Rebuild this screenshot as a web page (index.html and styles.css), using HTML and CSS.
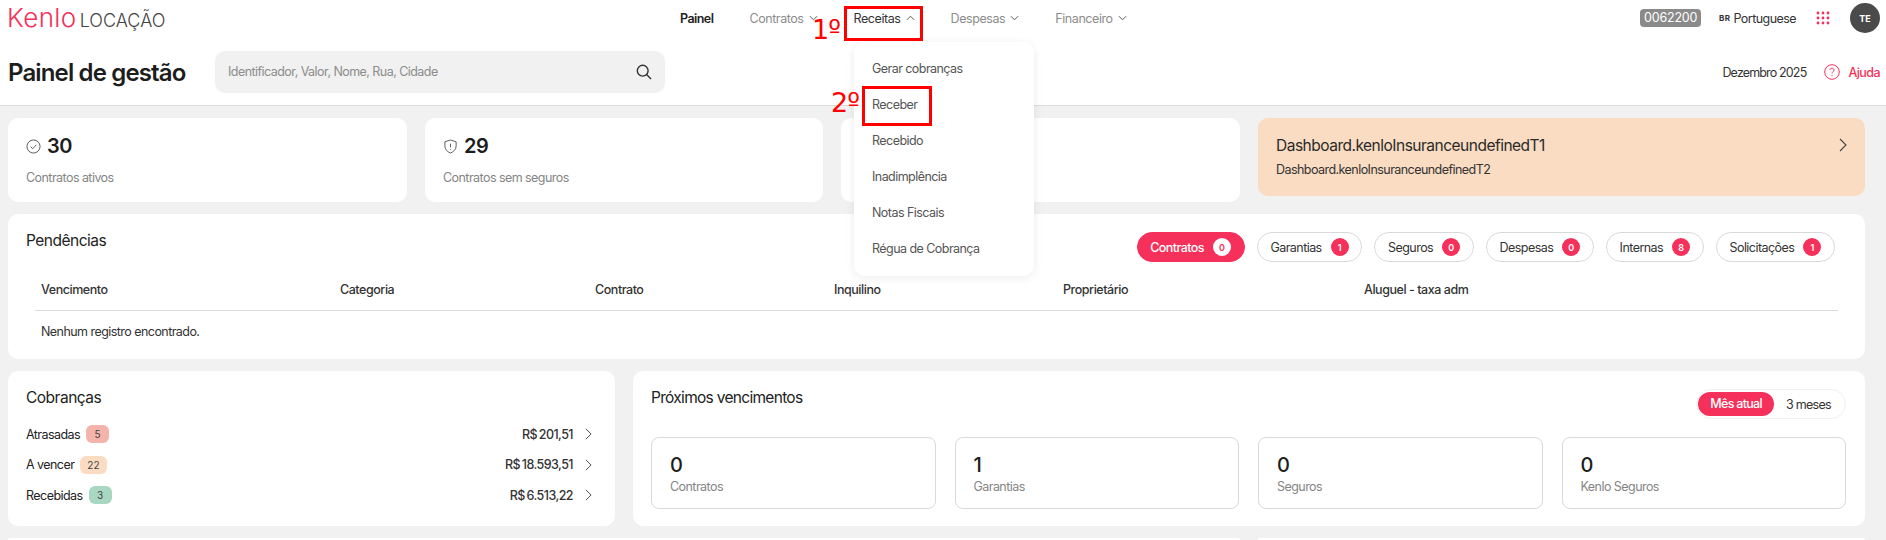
FILE: index.html
```html
<!DOCTYPE html>
<html lang="pt-BR">
<head>
<meta charset="utf-8">
<title>Kenlo Locação</title>
<link rel="stylesheet" href="styles.css">
</head>
<body>
<header class="header">
  <div class="topbar">
    <div class="logo"><span class="logo-mark">Kenlo</span><span class="logo-sub">LOCAÇÃO</span></div>
    <nav class="nav">
      <span class="nav-item nav-current">Painel</span>
      <span class="nav-item">Contratos <svg class="chev" viewBox="0 0 10 6"><path d="M1 1l4 4 4-4"/></svg></span>
      <span class="nav-item nav-open">Receitas <svg class="chev" viewBox="0 0 10 6"><path d="M1 5l4-4 4 4"/></svg></span>
      <span class="nav-item">Despesas <svg class="chev" viewBox="0 0 10 6"><path d="M1 1l4 4 4-4"/></svg></span>
      <span class="nav-item">Financeiro <svg class="chev" viewBox="0 0 10 6"><path d="M1 1l4 4 4-4"/></svg></span>
    </nav>
    <div class="top-right">
      <span class="code">0062200</span>
      <span class="lang"><b>BR</b>Portuguese</span>
      <svg class="apps" viewBox="0 0 14 14"><g><circle cx="2" cy="2" r="1.4"/><circle cx="7" cy="2" r="1.4"/><circle cx="12" cy="2" r="1.4"/><circle cx="2" cy="7" r="1.4"/><circle cx="7" cy="7" r="1.4"/><circle cx="12" cy="7" r="1.4"/><circle cx="2" cy="12" r="1.4"/><circle cx="7" cy="12" r="1.4"/><circle cx="12" cy="12" r="1.4"/></g></svg>
      <span class="avatar">TE</span>
    </div>
  </div>
  <div class="subbar">
    <h1 class="page-title">Painel de gestão</h1>
    <div class="search">
      <span class="search-text">Identificador, Valor, Nome, Rua, Cidade</span>
      <svg class="search-icon" viewBox="0 0 16 16"><circle cx="6.7" cy="6.7" r="5.4"/><path d="M10.6 10.6l4.4 4.4"/></svg>
    </div>
    <div class="sub-right">
      <span class="month">Dezembro 2025</span>
      <svg class="help-icon" viewBox="0 0 16 16"><circle cx="8" cy="8" r="7.3"/><path d="M6 6.2c0-1.2.9-2 2-2s2 .8 2 1.9c0 1.6-2 1.7-2 3.4"/><circle class="dot" cx="8" cy="11.6" r=".7"/></svg>
      <span class="help">Ajuda</span>
    </div>
  </div>
</header>

<main class="main">
  <section class="kpis">
    <div class="card kpi">
      <div class="kpi-top"><svg class="kpi-icon" viewBox="0 0 16 16"><circle cx="8" cy="8" r="7"/><path d="M5 8.2l2.2 2.1L11 6.2"/></svg><strong>30</strong></div>
      <p class="muted">Contratos ativos</p>
    </div>
    <div class="card kpi">
      <div class="kpi-top"><svg class="kpi-icon" viewBox="0 0 16 16"><path d="M8 1l6 2v4.500c0 3.500-2.500 6-6 7.500-3.500-1.500-6-4-6-7.500V3z"/><path d="M8 5v4M8 10.800v.7"/></svg><strong>29</strong></div>
      <p class="muted">Contratos sem seguros</p>
    </div>
    <div class="card kpi"></div>
    <div class="promo">
      <div>
        <p class="promo-title">Dashboard.kenloInsuranceundefinedT1</p>
        <p class="promo-sub">Dashboard.kenloInsuranceundefinedT2</p>
      </div>
      <svg class="arrow arrow-lg" viewBox="0 0 8 14"><path d="M1 1l6 6-6 6"/></svg>
    </div>
  </section>

  <section class="card pend">
    <div class="pend-head">
      <h2 class="section-title">Pendências</h2>
      <div class="pills">
        <span class="pill pill-on">Contratos <i>0</i></span>
        <span class="pill">Garantias <i>1</i></span>
        <span class="pill">Seguros <i>0</i></span>
        <span class="pill">Despesas <i>0</i></span>
        <span class="pill">Internas <i>8</i></span>
        <span class="pill">Solicitações <i>1</i></span>
      </div>
    </div>
    <div class="table-head">
      <span>Vencimento</span><span>Categoria</span><span>Contrato</span><span>Inquilino</span><span>Proprietário</span><span>Aluguel - taxa adm</span>
    </div>
    <p class="empty">Nenhum registro encontrado.</p>
  </section>

  <section class="row-split">
    <div class="card charges">
      <h2 class="section-title">Cobranças</h2>
      <ul class="charge-list">
        <li><span>Atrasadas</span><em class="chip chip-red">5</em><b>R$ 201,51</b><svg class="arrow" viewBox="0 0 8 14"><path d="M1 1l6 6-6 6"/></svg></li>
        <li><span>A vencer</span><em class="chip chip-orange">22</em><b>R$ 18.593,51</b><svg class="arrow" viewBox="0 0 8 14"><path d="M1 1l6 6-6 6"/></svg></li>
        <li><span>Recebidas</span><em class="chip chip-green">3</em><b>R$ 6.513,22</b><svg class="arrow" viewBox="0 0 8 14"><path d="M1 1l6 6-6 6"/></svg></li>
      </ul>
    </div>
    <div class="card due">
      <div class="due-head">
        <h2 class="section-title">Próximos vencimentos</h2>
        <div class="toggle"><span class="toggle-on">Mês atual</span><span class="toggle-off">3 meses</span></div>
      </div>
      <div class="due-grid">
        <div class="due-card"><strong>0</strong><p class="muted">Contratos</p></div>
        <div class="due-card"><strong>1</strong><p class="muted">Garantias</p></div>
        <div class="due-card"><strong>0</strong><p class="muted">Seguros</p></div>
        <div class="due-card"><strong>0</strong><p class="muted">Kenlo Seguros</p></div>
      </div>
    </div>
  </section>

  <section class="row-last">
    <div class="card stub"></div>
    <div class="card stub"></div>
  </section>
</main>

<div class="menu">
  <span>Gerar cobranças</span>
  <span>Receber</span>
  <span>Recebido</span>
  <span>Inadimplência</span>
  <span>Notas Fiscais</span>
  <span>Régua de Cobrança</span>
</div>
<div class="mark mark-one"></div>
<div class="mark mark-two"></div>
<span class="step step-one">1º</span>
<span class="step step-two">2º</span>
</body>
</html>
```

FILE: styles.css
```css
* { box-sizing: border-box; }
html, body { margin: 0; height: 540px; overflow: hidden; }
body {
  background: #f1f1f1;
  font-family: Inter, "Noto Sans", sans-serif;
  font-size: 12.5px;
  color: #222;
  letter-spacing: -0.55px;
  position: relative;
}
p, h1, h2, ul { margin: 0; padding: 0; }
.header { background: #fff; height: 106px; border-bottom: 1px solid #dcdcdc; }
.topbar { height: 36px; display: flex; align-items: center; position: relative; }
.logo { display: flex; align-items: baseline; margin-left: 7px; width: 673px; }
.logo-mark { font-size: 26px; font-weight: 300; color: #f5305a; letter-spacing: 0.4px; line-height: 36px; }
.logo-sub { font-size: 18px; font-weight: 300; color: #444; letter-spacing: 0; margin-left: 3px; }
.nav { display: flex; align-items: center; flex: 1; }
.nav-item { display: flex; align-items: center; gap: 5px; color: #8c8c8c; margin-right: 36px; white-space: nowrap; letter-spacing: -0.42px; }
.nav-current { color: #222; font-weight: 600; letter-spacing: -0.55px; }
.nav-open { color: #333; }
.chev { width: 9px; height: 6px; fill: none; stroke: #555; stroke-width: 1.1; }
.top-right { display: flex; align-items: center; margin-right: 6px; }
.code { background: #8a8a8a; color: #fff; border-radius: 4px; height: 18px; width: 61px; line-height: 18px; text-align: center; letter-spacing: -0.2px; }
.lang { margin-left: 18px; color: #333; display: flex; align-items: center; gap: 3px; }
.lang b { font-size: 8px; letter-spacing: .4px; font-weight: 700; }
.apps { width: 14px; height: 14px; margin-left: 20px; fill: #f5305a; }
.avatar { width: 30px; height: 30px; border-radius: 50%; background: #4a4a4a; color: #fff; font-size: 9px; font-weight: 700; display: flex; align-items: center; justify-content: center; margin-left: 20px; letter-spacing: 0; }
.subbar { display: flex; align-items: center; height: 69px; padding: 3px 6px 0 8px; position: relative; }
.page-title { font-size: 24px; font-weight: 600; color: #1d1d1d; width: 207px; letter-spacing: -0.85px; }
.search { width: 450px; height: 42px; background: #f1f1f1; border-radius: 10px; display: flex; align-items: center; justify-content: space-between; padding: 0 13px; }
.search-text { color: #8c8c8c; margin-top: -1px; }
.search-icon { width: 16px; height: 16px; fill: none; stroke: #333; stroke-width: 1.4; }
.sub-right { margin-left: auto; display: flex; align-items: center; }
.month { color: #333; letter-spacing: -0.85px; }
.help-icon { width: 16px; height: 16px; margin-left: 18px; fill: none; stroke: #f5305a; stroke-width: 1; }
.help-icon .dot { fill: #f5305a; stroke: none; }
.help { color: #f5305a; font-weight: 500; margin-left: 8px; }

.main { padding: 12px 21px 0 8px; display: flex; flex-direction: column; gap: 12px; }
.card { background: #fff; border-radius: 10px; }
.kpis { display: grid; grid-template-columns: 399px 398px 399px 1fr; column-gap: 18px; align-items: start; }
.kpi { height: 84px; padding: 15px 18px; }
.kpi-top { display: flex; align-items: center; gap: 6px; height: 26px; }
.kpi-top strong { font-size: 20px; font-weight: 600; color: #1d1d1d; }
.kpi-icon { width: 15px; height: 15px; fill: none; stroke: #555; stroke-width: 1; }
.muted { color: #858585; }
.kpi .muted { margin-top: 11px; }
.promo { height: 78px; background: #f9dcc1; border-radius: 10px; display: flex; align-items: flex-start; justify-content: space-between; padding: 18px; }
.promo-title { font-size: 15.5px; font-weight: 400; color: #2a2a2a; letter-spacing: -0.5px; }
.promo-sub { color: #333; margin-top: 7px; }
.arrow { width: 7px; height: 12px; fill: none; stroke: #444; stroke-width: 1.1; }
.arrow-lg { width: 8px; height: 14px; margin-top: 2px; }

.section-title { font-size: 15.5px; font-weight: 400; color: #222; letter-spacing: -0.5px; }
.pend { height: 145px; padding: 18px 30px 0 18px; }
.pend-head { display: flex; justify-content: space-between; align-items: flex-start; }
.pend-head .section-title { margin-top: -1px; }
.pills { display: flex; gap: 12px; }
.pill { height: 30px; border: 1px solid #d9d9d9; border-radius: 15px; padding: 0 12.7px; display: flex; align-items: center; gap: 9px; color: #333; }
.pill i { width: 18px; height: 18px; border-radius: 50%; background: #f5305a; color: #fff; font-style: normal; font-size: 9px; font-weight: 600; letter-spacing: 0; display: flex; align-items: center; justify-content: center; }
.pill-on { background: #f5305a; border-color: #f5305a; color: #fff; font-weight: 500; }
.pill-on i { background: #fff; color: #f5305a; }
.table-head { display: grid; grid-template-columns: 299px 255px 239px 229px 301px 1fr; margin: 15px 0 0 9px; width: 1803px; height: 34px; padding: 5px 6px 0; border-bottom: 1px solid #dcdcdc; font-weight: 500; color: #333; letter-spacing: -0.45px; }
.empty { margin: 13px 0 0 15px; color: #333; }

.row-split { display: grid; grid-template-columns: 607px 1fr; column-gap: 18px; }
.charges { height: 155px; padding: 17px 18px; }
.charge-list { list-style: none; margin-top: 12px; }
.charge-list li { height: 30.5px; display: flex; align-items: center; }
.chip { height: 18px; min-width: 23px; padding: 0 7px; border-radius: 6px; margin-left: 6px; font-style: normal; font-size: 10px; display: flex; align-items: center; justify-content: center; color: #444; letter-spacing: 0; }
.chip-red { background: #f4b4ab; }
.chip-orange { background: #fbdcc3; }
.chip-green { background: #a8d8c1; }
.charge-list b { margin-left: auto; font-weight: 500; color: #333; word-spacing: -1px; }
.charge-list .arrow { margin: 0 5px 0 12px; }
.due { height: 155px; padding: 17px 19px 0 18px; }
.due-head { display: flex; justify-content: space-between; align-items: flex-start; }
.due-head .section-title { letter-spacing: -0.7px; }
.toggle { height: 30px; margin-top: 1px; border: 1px solid #f0f0f0; border-radius: 15px; padding: 2px 0 2px 1px; display: flex; align-items: center; }
.toggle-on { background: #f5305a; color: #fff; border-radius: 12px; height: 24px; padding: 0 12px; line-height: 24px; font-weight: 500; letter-spacing: -0.7px; }
.toggle-off { padding: 0 14px 0 12px; color: #333; letter-spacing: -0.7px; }
.due-grid { display: grid; grid-template-columns: repeat(4, 1fr); column-gap: 19px; margin-top: 18px; }
.due-card { height: 72px; border: 1px solid #d9d9d9; border-radius: 8px; padding: 14px 18px; }
.due-card strong { display: block; font-size: 20px; font-weight: 500; color: #1d1d1d; line-height: 26px; }
.due-card .muted { margin-top: 1px; }
.row-last { display: grid; grid-template-columns: 1232px 1fr; column-gap: 18px; }
.stub { height: 2px; }

.menu { position: absolute; left: 854px; top: 42px; width: 180px; height: 234px; background: #fff; border-radius: 10px; box-shadow: 0 2px 10px rgba(0,0,0,.08); padding: 9px 18px; display: flex; flex-direction: column; color: #555; }
.menu span { height: 36px; line-height: 36px; white-space: nowrap; }
.mark { position: absolute; border: 3px solid #f00; }
.mark-one { left: 844px; top: 6px; width: 79px; height: 35px; }
.mark-two { left: 862px; top: 86px; width: 70px; height: 40px; }
.step { position: absolute; color: #f00; font-family: "DejaVu Sans", sans-serif; font-size: 27px; line-height: 30px; letter-spacing: -1px; }
.step-one { left: 812px; top: 15px; }
.step-two { left: 831px; top: 88px; }
```
